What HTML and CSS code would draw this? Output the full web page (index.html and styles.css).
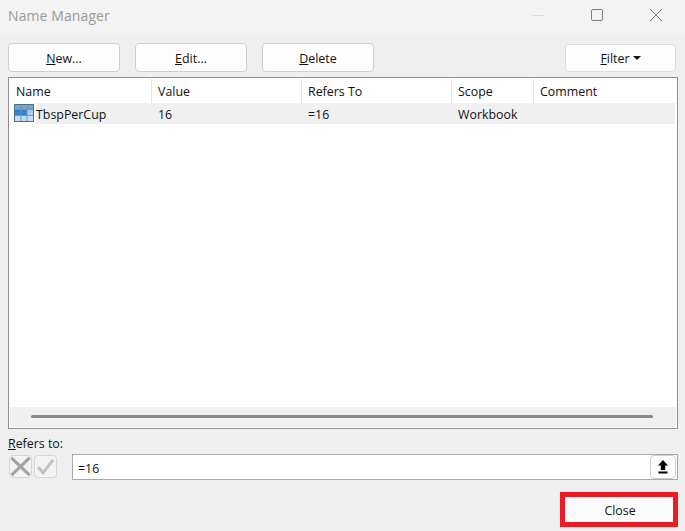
FILE: index.html
```html
<!DOCTYPE html>
<html lang="en">
<head>
<meta charset="utf-8">
<title>Name Manager</title>
<link rel="stylesheet" href="styles.css">
</head>
<body>
<div class="dialog">
  <header class="titlebar">
    <span class="title">Name Manager</span>
    <div class="winctl">
      <svg class="wicon" width="14" height="14" viewBox="0 0 14 14"><path d="M1 7.5h12" stroke="#dcdcdc" stroke-width="1" fill="none"/></svg>
      <svg class="wicon" width="14" height="14" viewBox="0 0 14 14"><rect x="1.5" y="1.5" width="11" height="11" rx="1.5" stroke="#7d7d7d" stroke-width="1" fill="none"/></svg>
      <svg class="wicon" width="14" height="14" viewBox="0 0 14 14"><path d="M1 1l12 12M13 1L1 13" stroke="#7d7d7d" stroke-width="1" fill="none"/></svg>
    </div>
  </header>
  <main class="content">
    <div class="toolbar">
      <div class="btn-group">
        <button class="btn wide"><u>N</u>ew...</button>
        <button class="btn wide"><u>E</u>dit...</button>
        <button class="btn wide"><u>D</u>elete</button>
      </div>
      <button class="btn filter"><span><u>F</u>ilter</span><span class="caret"></span></button>
    </div>
    <div class="list">
      <div class="row head">
        <div class="c1">Name</div><div class="c2">Value</div><div class="c3">Refers To</div><div class="c4">Scope</div><div class="c5">Comment</div>
      </div>
      <div class="row item">
        <div class="c1 namecell">
          <svg class="tableicon" width="20" height="18" viewBox="0 0 20 18">
            <rect width="20" height="18" fill="#4d6f8f"/>
            <rect x="1" y="1" width="18" height="4" fill="#7ba5c8"/>
            <rect x="1" y="5" width="18" height="6" fill="#a9cdea"/>
            <rect x="1" y="5" width="12" height="6" fill="#2f83d1"/>
            <rect x="1" y="11" width="18" height="6" fill="#c5ddf0"/>
            <path d="M7 1v16M13 1v16M1 5.5h18M1 11.5h18" stroke="#6f97b8" stroke-width="1"/>
          </svg>
          <span>TbspPerCup</span>
        </div>
        <div class="c2">16</div><div class="c3">=16</div><div class="c4">Workbook</div><div class="c5"></div>
      </div>
      <div class="spacer"></div>
      <div class="hscroll"><div class="thumb"></div></div>
    </div>
    <label class="reflabel"><u>R</u>efers to:</label>
    <div class="refrow">
      <button class="iconbtn" aria-label="Cancel"><svg width="22" height="21" viewBox="0 0 22 21"><path d="M1.5 1.5l19 18M20.5 1.5l-19 18" stroke="#a3a3a3" stroke-width="3.2" fill="none"/></svg></button>
      <button class="iconbtn second" aria-label="Enter"><svg width="22" height="21" viewBox="0 0 22 21"><path d="M3 11l5.5 6L19 3.5" stroke="#c2c2c2" stroke-width="3.2" fill="none"/></svg></button>
      <div class="refinput">
        <span class="refvalue">=16</span>
        <button class="upload" aria-label="Collapse"><svg width="10" height="14" viewBox="0 0 10 14"><path d="M5 0L10 5.5H7.2V10H2.8V5.5H0z" fill="#000"/><rect x="0.5" y="11.5" width="9" height="2" fill="#000"/></svg></button>
      </div>
    </div>
    <div class="footer">
      <div class="highlight"><button class="closebtn">Close</button></div>
    </div>
  </main>
</div>
</body>
</html>
```
FILE: styles.css
```css
* { box-sizing: border-box; }
html, body { margin: 0; height: 100%; }
body { font-family: "Open Sans", "Noto Sans", sans-serif; font-size: 12.4px; color: #111; background: #efefef; overflow: hidden; }
button { font: inherit; color: inherit; padding: 0; }
.dialog { width: 685px; height: 531px; display: flex; flex-direction: column; }
.titlebar { height: 33px; background: #f3f3f3; display: flex; justify-content: space-between; align-items: center; padding: 0 22px 3px 8px; }
.title { font-size: 14px; color: #9a9a9a; letter-spacing: 0.1px; }
.winctl { display: flex; gap: 45px; align-items: center; }
.content { flex: 1; padding: 10px 7px 0 8px; display: flex; flex-direction: column; }
.toolbar { display: flex; justify-content: space-between; height: 29px; padding-right: 2px; }
.btn-group { display: flex; gap: 15px; }
.btn { background: #fdfdfd; border: 1px solid #d0d0d0; border-radius: 4px; text-align: center; }
.wide { width: 112px; height: 29px; border-color: #ccd0d5; padding-top: 1px; }
.filter { width: 111px; height: 28px; margin-top: 1px; display: flex; align-items: center; justify-content: center; gap: 3px; border-color: #dcdcdc; }
.caret { width: 0; height: 0; border-left: 4px solid transparent; border-right: 4px solid transparent; border-top: 4px solid #111; }
.list { margin-top: 5px; height: 352px; border: 1px solid #8e8f98; background: #fff; padding-top: 1px; display: flex; flex-direction: column; box-shadow: inset 0 0 0 1px #fff; }
.row { display: grid; grid-template-columns: 142px 150px 150px 82px 1fr; margin: 0 1px; }
.row > div { padding-left: 6px; white-space: nowrap; }
.head { height: 24px; align-items: center; }
.head > div { height: 24px; line-height: 26px; border-right: 1px solid #e6e6e6; }
.head > div:last-child { border-right: 0; }
.item { height: 21px; background: #f0f0f0; align-items: center; margin-right: 2px; line-height: 23px; }
.row > .namecell { display: flex; align-items: center; gap: 2px; padding-left: 4px; background: #fff; height: 21px; }
.namecell span { background: #f0f0f0; flex: 1; line-height: 23px; height: 21px; }
.item > div { height: 21px; }
.tableicon { flex: none; margin-top: -2px; }
.spacer { flex: 1; }
.hscroll { height: 20px; background: #f0f0f0; margin: 0 1px 1px; padding: 8px 23px 0 21px; }
.thumb { height: 3px; background: #8a8a8a; border-radius: 2px; }
.reflabel { margin-top: 6px; height: 18px; line-height: 17px; margin-bottom: 1px; }
.refrow { display: flex; align-items: flex-start; height: 26px; }
.iconbtn { width: 23px; height: 23px; margin: 1px 0 0 1px; background: #f3f3f3; border: 1px solid #d6d6d6; border-radius: 4px; display: flex; align-items: center; justify-content: center; }
.iconbtn.second { margin-left: 2px; }
.refinput { margin-left: 15px; flex: 1; height: 26px; background: #fff; border: 1px solid #a9a9ac; display: flex; justify-content: space-between; align-items: center; padding: 0 0 0 5px; }
.refvalue { padding-top: 2px; }
.upload { width: 26px; height: 24px; background: #fdfdfd; border: 1px solid #d0d0d0; border-radius: 4px; display: flex; align-items: center; justify-content: center; margin-right: 1px; }
.footer { display: flex; justify-content: flex-end; margin-top: 12px; }
.highlight { width: 118px; height: 35px; border: 5px solid #ed1c24; }
.closebtn { width: 100%; height: 100%; background: #fcfcfc; border: 0; display: block; padding: 2px 0 0 2px; }
```
